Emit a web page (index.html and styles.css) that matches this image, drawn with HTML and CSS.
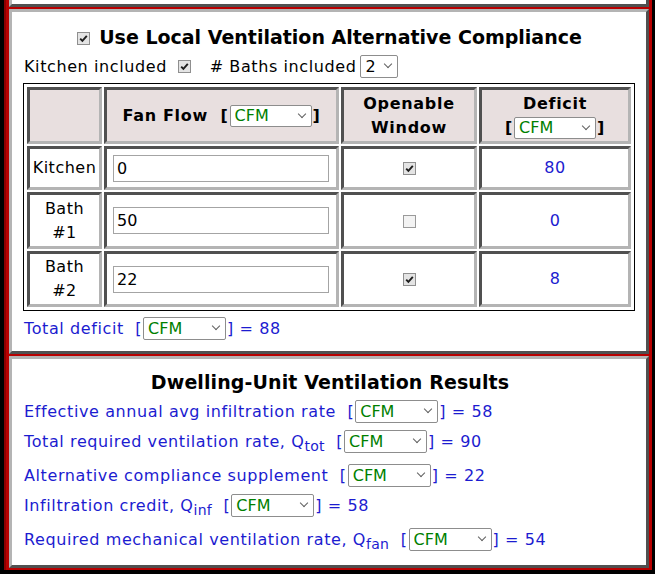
FILE: index.html
```html
<!DOCTYPE html>
<html>
<head>
<meta charset="utf-8">
<link rel="stylesheet" href="styles.css">
</head>
<body>
<div class="frame">
  <div class="panel prev"></div>

  <div class="panel compliance">
    <h1 class="title"><svg class="cb cb-title" width="13" height="13" viewBox="0 0 13 13"><rect x="0.5" y="0.5" width="12" height="12" fill="#e4e4e4" stroke="#8f8f8f"/><path d="M3.2 6.6 5.4 8.9 9.8 3.9" fill="none" stroke="#1e1e1e" stroke-width="1.9"/></svg>Use Local Ventilation Alternative Compliance</h1>
    <div class="opts">Kitchen included <svg class="cb cb-kitchen" width="13" height="13" viewBox="0 0 13 13"><rect x="0.5" y="0.5" width="12" height="12" fill="#e4e4e4" stroke="#8f8f8f"/><path d="M3.2 6.6 5.4 8.9 9.8 3.9" fill="none" stroke="#1e1e1e" stroke-width="1.9"/></svg><span class="baths"># Baths included</span><span class="sel sel-num"><select><option>2</option></select></span></div>

    <table class="grid">
      <tr class="r-head">
        <th class="c1"></th>
        <th class="c2">Fan Flow&nbsp;&nbsp;[<span class="sel sel-hdr"><select><option>CFM</option></select></span>]</th>
        <th class="c3">Openable<br>Window</th>
        <th class="c4">Deficit<br>[<span class="sel sel-hdr"><select><option>CFM</option></select></span>]</th>
      </tr>
      <tr class="r-kitchen">
        <td>Kitchen</td>
        <td class="flow"><input class="flow-in" type="text" value="0"></td>
        <td><svg class="cb" width="13" height="13" viewBox="0 0 13 13"><rect x="0.5" y="0.5" width="12" height="12" fill="#e4e4e4" stroke="#8f8f8f"/><path d="M3.2 6.6 5.4 8.9 9.8 3.9" fill="none" stroke="#1e1e1e" stroke-width="1.9"/></svg></td>
        <td class="val">80</td>
      </tr>
      <tr class="r-bath1">
        <td>Bath<br>#1</td>
        <td class="flow"><input class="flow-in" type="text" value="50"></td>
        <td><svg class="cb" width="13" height="13" viewBox="0 0 13 13"><rect x="0.5" y="0.5" width="12" height="12" fill="#f3f3f3" stroke="#9a9a9a"/></svg></td>
        <td class="val">0</td>
      </tr>
      <tr class="r-bath2">
        <td>Bath<br>#2</td>
        <td class="flow"><input class="flow-in" type="text" value="22"></td>
        <td><svg class="cb" width="13" height="13" viewBox="0 0 13 13"><rect x="0.5" y="0.5" width="12" height="12" fill="#e4e4e4" stroke="#8f8f8f"/><path d="M3.2 6.6 5.4 8.9 9.8 3.9" fill="none" stroke="#1e1e1e" stroke-width="1.9"/></svg></td>
        <td class="val">8</td>
      </tr>
    </table>

    <div class="total">Total deficit&nbsp;&nbsp;[<span class="sel sel-cfm"><select><option>CFM</option></select></span>] = 88</div>
  </div>

  <div class="panel results">
    <h2 class="title">Dwelling-Unit Ventilation Results</h2>
    <div class="rrow">Effective annual avg infiltration rate&nbsp;&nbsp;[<span class="sel sel-cfm"><select><option>CFM</option></select></span>] = 58</div>
    <div class="rrow has-sub">Total required ventilation rate, Q<sub>tot</sub>&nbsp;&nbsp;[<span class="sel sel-cfm"><select><option>CFM</option></select></span>] = 90</div>
    <div class="rrow">Alternative compliance supplement&nbsp;&nbsp;[<span class="sel sel-cfm"><select><option>CFM</option></select></span>] = 22</div>
    <div class="rrow has-sub">Infiltration credit, Q<sub>inf</sub>&nbsp;&nbsp;[<span class="sel sel-cfm"><select><option>CFM</option></select></span>] = 58</div>
    <div class="rrow">Required mechanical ventilation rate, Q<sub>fan</sub>&nbsp;&nbsp;[<span class="sel sel-cfm"><select><option>CFM</option></select></span>] = 54</div>
  </div>
</div>
</body>
</html>
```

FILE: styles.css
```css
* { box-sizing: border-box; }
html, body { margin: 0; padding: 0; }
body {
  background: #000;
  font-family: "DejaVu Sans", Verdana, sans-serif;
  font-size: 16px;
  letter-spacing: 0.6px;
  color: #000;
  width: 655px;
  height: 574px;
  overflow: hidden;
}

.frame {
  margin-left: 4px;
  width: 648px;
  background: #b80000;
  border-left: 2px solid #8c0000;
  padding: 0 3px 2px 3px;
  display: flex;
  flex-direction: column;
  gap: 2px;
}

.panel {
  background: #fff;
  border: 3px solid;
  border-color: #b4b4b4 #505050 #505050 #b4b4b4;
}
.panel.prev { height: 7px; border-top: 0; }
.panel.compliance { height: 345px; padding: 13px 10px 0 11px; }
.panel.results { height: 212px; padding: 11px 10px 0 12px; }

.title {
  margin: 0;
  text-align: center;
  font-size: 19px;
  font-weight: bold;
  line-height: 24px;
  letter-spacing: 0;
}
.results .title { letter-spacing: 0.1px; }
.cb { display: inline-block; vertical-align: middle; }
.cb-title { margin-right: 9px; vertical-align: -1px; }

.opts {
  margin-top: 6px;
  height: 24px;
  line-height: 24px;
  padding-left: 1px;
  white-space: nowrap;
}
.cb-kitchen { margin-left: 5px; vertical-align: -1px; }
.baths { margin-left: 19px; margin-right: 3px; }

/* selects */
.sel { position: relative; display: inline-block; vertical-align: baseline; margin: 0 1px; }
.sel select {
  -webkit-appearance: none;
  appearance: none;
  display: block;
  width: 100%;
  height: 23px;
  margin: 0;
  padding: 0 0 0 4px;
  border: 1px solid #8d8d8d;
  border-radius: 2px;
  background: #fff;
  color: #008000;
  font: 16px "DejaVu Sans", Verdana, sans-serif;
  letter-spacing: 0;
  line-height: 21px;
}
.sel::after {
  content: "";
  position: absolute;
  right: 7px;
  top: 6px;
  width: 5px;
  height: 5px;
  border-right: 1px solid #606060;
  border-bottom: 1px solid #606060;
  transform: rotate(45deg);
  pointer-events: none;
}
.sel-num { width: 38px; }
.sel-num select { color: #000; }
.sel-cfm { width: 83px; }
.sel-hdr { width: 82px; }
.sel-hdr select { height: 22px; line-height: 20px; }

/* table */
.grid {
  margin-top: 4px;
  width: 612px;
  border: 1px solid #000;
  padding: 1px;
  border-collapse: separate;
  border-spacing: 2px;
  table-layout: fixed;
}
.grid th, .grid td {
  border: 3px solid;
  border-color: #505050 #b4b4b4 #b4b4b4 #505050;
  padding: 0 1px;
  text-align: center;
  vertical-align: middle;
  line-height: 24px;
}
.grid td { letter-spacing: 0.5px; }
.grid th { background: #e8dfdf; font-weight: bold; letter-spacing: 0.7px; }
.c1 { width: 75px; }
.c2 { width: 235px; white-space: nowrap; }
.c3 { width: 136px; }
.c4 { width: 152px; }
.r-head { height: 57px; }
.r-kitchen { height: 44px; }
.r-bath1 { height: 57px; }
.r-bath2 { height: 56px; }
.grid td.flow { text-align: left; padding-left: 6px; }
.flow-in {
  display: block;
  width: 216px;
  height: 27px;
  margin: 0;
  padding: 0 3px;
  border: 1px solid #a4a4a4;
  font: 16px "DejaVu Sans", Verdana, sans-serif;
  color: #000;
  background: #fff;
}
.grid td.val { color: #1c1cd0; }

.total {
  margin-top: 6px;
  height: 23px;
  line-height: 23px;
  padding-left: 1px;
  color: #1c1cd0;
  white-space: nowrap;
}

.results .title { margin-bottom: 6px; }
.rrow {
  height: 23px;
  line-height: 23px;
  margin-bottom: 7px;
  color: #1c1cd0;
  white-space: nowrap;
}
.rrow.has-sub { margin-bottom: 11px; }
sub { font-size: 14px; vertical-align: -4px; line-height: 0; letter-spacing: 0.3px; }
```
